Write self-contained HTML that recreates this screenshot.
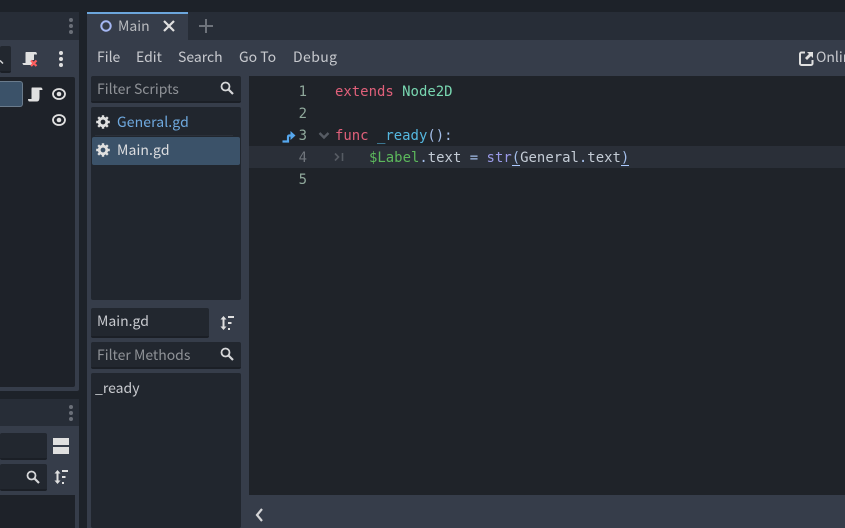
<!DOCTYPE html>
<html><head><meta charset="utf-8">
<style>
html,body{margin:0;padding:0}
body{width:845px;height:528px;overflow:hidden;position:relative;background:#1d2229;font-family:"Noto Sans CJK JP","Liberation Sans",sans-serif;font-size:14px;color:#c8cacf}
div,svg{position:absolute}
.t{white-space:nowrap;line-height:20px;height:20px}
.f{background:#22272f;border-bottom:2px solid #1b1f26;box-sizing:border-box;border-radius:2px}
.l{background:#21262e;border-radius:2px}
.dim{color:#8f9297}
.code{font-family:"DejaVu Sans Mono","Liberation Mono",monospace;font-size:13.95px;line-height:22px;height:22px;white-space:pre;color:#c4ccd6}
.n{font-family:"DejaVu Sans Mono","Liberation Mono",monospace;font-size:13.95px;line-height:22px;height:22px;color:#8fa89b;width:20px;text-align:right}
</style></head><body>

<!-- left panel -->
<div style="left:0;top:12px;width:79px;height:379px;background:#363d4a;border-radius:0 2px 2px 0"></div>
<div style="left:0;top:12px;width:79px;height:28px;background:#272d37"></div>
<div style="left:69px;top:18px;width:4px;height:4px;border-radius:2px;background:#6a6f78"></div>
<div style="left:69px;top:24px;width:4px;height:4px;border-radius:2px;background:#6a6f78"></div>
<div style="left:69px;top:30px;width:4px;height:4px;border-radius:2px;background:#6a6f78"></div>
<div class="f" style="left:0;top:46px;width:11px;height:27px;background:#22272f"></div>
<svg style="left:0;top:59px" width="6" height="6" viewBox="0 0 6 6"><path d="M0 1.500L3 4.500" fill="none" stroke="#d5d6d8" stroke-width="1.500"/></svg>
<svg style="left:22px;top:51px" width="16" height="16" viewBox="0 0 16 16"><path d="M4 1H13C14.500 1 15 2 15 3.500H12V9H10V14H2C1 14 .5 13 .5 12H3.500V3C3.500 2 3.500 1 4 1Z" fill="#e0e0e0"/><path d="M9 9.500L14.500 15M14.500 9.500L9 15" stroke="#ff5f5f" stroke-width="2.200"/></svg>
<div style="left:59px;top:51px;width:4px;height:4px;border-radius:2px;background:#e0e0e0"></div>
<div style="left:59px;top:57px;width:4px;height:4px;border-radius:2px;background:#e0e0e0"></div>
<div style="left:59px;top:63px;width:4px;height:4px;border-radius:2px;background:#e0e0e0"></div>
<div style="left:0;top:77px;width:75px;height:310px;background:#1e2229;border-radius:0 2px 2px 0"></div>
<div style="left:0;top:81px;width:22px;height:24px;background:#3b5269;border:1px solid #6a7b8c;border-left:0;border-radius:0 3px 3px 0"></div>
<svg style="left:28px;top:87px" width="15" height="15" viewBox="0 0 15 15"><path d="M4 .5H12.500C14 .5 14.500 1.500 14.500 3H11.500V10C11.500 12.500 11 14.500 9 14.500H1.500C.5 14.500 0 13.500 0 12H3.500V3C3.500 1.500 3.500 .5 4 .5Z" fill="#e0e0e0"/></svg>
<svg style="left:52px;top:87px" width="14" height="14" viewBox="0 0 14 14"><ellipse cx="7" cy="7" rx="6" ry="5" fill="none" stroke="#e0e0e0" stroke-width="1.800"/><circle cx="7" cy="7" r="2.300" fill="#e0e0e0"/></svg>
<svg style="left:52px;top:113px" width="14" height="14" viewBox="0 0 14 14"><ellipse cx="7" cy="7" rx="6" ry="5" fill="none" stroke="#e0e0e0" stroke-width="1.800"/><circle cx="7" cy="7" r="2.300" fill="#e0e0e0"/></svg>

<!-- left lower panel -->
<div style="left:0;top:399px;width:79px;height:129px;background:#363d4a;border-radius:0 2px 0 0"></div>
<div style="left:0;top:399px;width:79px;height:27px;background:#272d37"></div>
<div style="left:69px;top:405px;width:4px;height:4px;border-radius:2px;background:#6a6f78"></div>
<div style="left:69px;top:411px;width:4px;height:4px;border-radius:2px;background:#6a6f78"></div>
<div style="left:69px;top:417px;width:4px;height:4px;border-radius:2px;background:#6a6f78"></div>
<div class="f" style="left:0;top:433px;width:47px;height:27px"></div>
<div style="left:53px;top:438px;width:16px;height:7px;background:#e0e0e0"></div>
<div style="left:53px;top:447px;width:16px;height:7px;background:#e0e0e0"></div>
<div class="f" style="left:0;top:464px;width:47px;height:27px"></div>
<svg style="left:26px;top:470px" width="14" height="14" viewBox="0 0 14 14"><circle cx="5.500" cy="5.500" r="4" fill="none" stroke="#d5d6d8" stroke-width="1.800"/><path d="M8.500 8.500L13 13" stroke="#d5d6d8" stroke-width="2.200"/></svg>
<svg style="left:53px;top:469px" width="16" height="16" viewBox="0 0 16 16"><path d="M4.500 2V14" stroke="#e0e0e0" stroke-width="2"/><path d="M1.500 4.500L4.500 1L7.500 4.500ZM1.500 11.500L4.500 15L7.500 11.500Z" fill="#e0e0e0"/><path d="M9 2H15M9 8H12.500M9 14H11" stroke="#e0e0e0" stroke-width="2"/></svg>
<div style="left:0;top:495px;width:75px;height:33px;background:#1e2229"></div>

<!-- right panel -->
<div style="left:87px;top:12px;width:758px;height:516px;background:#363d4a"></div>
<div style="left:87px;top:12px;width:758px;height:28px;background:#272d37"></div>
<div style="left:87px;top:12px;width:101px;height:28px;background:#363d4a"></div>
<div style="left:87px;top:12px;width:101px;height:2px;background:#6ca6dc"></div>
<svg style="left:99px;top:19px" width="14" height="14" viewBox="0 0 14 14"><circle cx="7" cy="7" r="4.700" fill="none" stroke="#a5b7f3" stroke-width="2"/></svg>
<div class="t" style="left:118px;top:16px;color:#b9bbbf">Main</div>
<svg style="left:163px;top:20px" width="12" height="12" viewBox="0 0 12 12"><path d="M1 1L11 11M11 1L1 11" stroke="#e0e0e0" stroke-width="2.200"/></svg>
<svg style="left:198px;top:18px" width="16" height="16" viewBox="0 0 16 16"><path d="M8 1V15M1 8H15" stroke="#6e737b" stroke-width="2"/></svg>

<div class="t" style="left:97px;top:47px">File</div>
<div class="t" style="left:136px;top:47px">Edit</div>
<div class="t" style="left:178px;top:47px">Search</div>
<div class="t" style="left:239px;top:47px">Go To</div>
<div class="t" style="left:293px;top:47px;letter-spacing:.4px">Debug</div>
<svg style="left:799px;top:51px" width="15" height="15" viewBox="0 0 15 15"><path d="M6 1.500H2.500A1.500 1.500 0 0 0 1 3V12.500A1.500 1.500 0 0 0 2.500 14H12A1.500 1.500 0 0 0 13.500 12.500V9" fill="none" stroke="#e0e0e0" stroke-width="2"/><path d="M8 1H14V7L12 5L8 9L6 7L10 3Z" fill="#e0e0e0"/></svg>
<div style="left:816px;top:47px;width:29px;height:20px;overflow:hidden"><div class="t" style="left:0;top:0">Online Docs</div></div>

<!-- scripts column -->
<div class="f" style="left:91px;top:76px;width:150px;height:27px"></div>
<div class="t dim" style="left:97px;top:79px">Filter Scripts</div>
<svg style="left:220px;top:81px" width="14" height="14" viewBox="0 0 14 14"><circle cx="5.500" cy="5.500" r="4" fill="none" stroke="#d5d6d8" stroke-width="1.800"/><path d="M8.500 8.500L13 13" stroke="#d5d6d8" stroke-width="2.200"/></svg>
<div class="l" style="left:91px;top:107px;width:150px;height:193px"></div>
<div style="left:95px;top:135px;width:138px;height:1px;background:#2b3039"></div>
<div style="left:92px;top:137px;width:148px;height:28px;background:#3b5269;border-radius:2px"></div>
<svg style="left:96px;top:115px" width="14" height="14" viewBox="0 0 14 14"><circle cx="7" cy="7" r="3.800" fill="none" stroke="#e0e0e0" stroke-width="2.800"/><path d="M7 .2V13.800M.2 7H13.800M2.200 2.200L11.800 11.800M11.800 2.200L2.200 11.800" stroke="#e0e0e0" stroke-width="2.400" stroke-dasharray="3 7.600"/></svg>
<svg style="left:96px;top:143px" width="14" height="14" viewBox="0 0 14 14"><circle cx="7" cy="7" r="3.800" fill="none" stroke="#e0e0e0" stroke-width="2.800"/><path d="M7 .2V13.800M.2 7H13.800M2.200 2.200L11.800 11.800M11.800 2.200L2.200 11.800" stroke="#e0e0e0" stroke-width="2.400" stroke-dasharray="3 7.600"/></svg>
<div class="t" style="left:117px;top:112px;color:#6fa9df;letter-spacing:.1px">General.gd</div>
<div class="t" style="left:117px;top:140px;color:#dcdde0;letter-spacing:.1px">Main.gd</div>

<div class="f" style="left:91px;top:308px;width:118px;height:30px"></div>
<div class="t" style="left:97px;top:311px">Main.gd</div>
<svg style="left:219px;top:315px" width="16" height="16" viewBox="0 0 16 16"><path d="M4.500 2V14" stroke="#e0e0e0" stroke-width="2"/><path d="M1.500 4.500L4.500 1L7.500 4.500ZM1.500 11.500L4.500 15L7.500 11.500Z" fill="#e0e0e0"/><path d="M9 2H15M9 8H12.500M9 14H11" stroke="#e0e0e0" stroke-width="2"/></svg>
<div class="f" style="left:91px;top:342px;width:150px;height:27px"></div>
<div class="t dim" style="left:97px;top:345px">Filter Methods</div>
<svg style="left:220px;top:347px" width="14" height="14" viewBox="0 0 14 14"><circle cx="5.500" cy="5.500" r="4" fill="none" stroke="#d5d6d8" stroke-width="1.800"/><path d="M8.500 8.500L13 13" stroke="#d5d6d8" stroke-width="2.200"/></svg>
<div class="l" style="left:91px;top:373px;width:150px;height:155px"></div>
<div class="t" style="left:95px;top:378px">_ready</div>

<!-- editor -->
<div style="left:249px;top:76px;width:596px;height:419px;background:#1f2329"></div>
<div style="left:249px;top:146px;width:596px;height:22px;background:#2a2f38"></div>
<div class="n" style="left:287px;top:81px">1</div>
<div class="n" style="left:287px;top:103px">2</div>
<div class="n" style="left:287px;top:125px">3</div>
<div class="n" style="left:287px;top:147px;color:#70757c">4</div>
<div class="n" style="left:287px;top:169px">5</div>
<svg style="left:282px;top:129px" width="14" height="14" viewBox="0 0 14 14"><path d="M.5 12.500H6V8C6 7 6.500 6.500 7.500 6.500H9" fill="none" stroke="#56a8ef" stroke-width="2.200"/><path d="M8.500 2L13.500 6.500L8.500 11Z" fill="#56a8ef"/></svg>
<svg style="left:318px;top:131px" width="12" height="9" viewBox="0 0 12 9"><path d="M1.500 2L6 6.500L10.500 2" fill="none" stroke="#565b63" stroke-width="2.400"/></svg>
<svg style="left:334px;top:152px" width="10" height="10" viewBox="0 0 10 10"><path d="M1 1.500L4.500 5L1 8.500" fill="none" stroke="#565b63" stroke-width="1.600"/><path d="M8.500 1V9" stroke="#565b63" stroke-width="1.600"/></svg>

<div class="code" style="left:335px;top:81px"><span style="color:#e0607a">extends</span> <span style="color:#78d6b0">Node2D</span></div>
<div class="code" style="left:335px;top:125px"><span style="color:#e0607a">func</span> <span style="color:#55b8e0">_ready</span><span style="color:#a3bde8">():</span></div>
<div class="code" style="left:369px;top:147px"><span style="color:#5cb85c">$Label</span><span style="color:#a3bde8">.</span>text <span style="color:#a3bde8">=</span> <span style="color:#9a9ae8">str</span><span style="color:#a3bde8">(</span>General<span style="color:#a3bde8">.</span>text<span style="color:#a3bde8">)</span></div>
<div style="left:512px;top:165px;width:8px;height:1px;background:#abc9ff"></div>
<div style="left:621px;top:165px;width:8px;height:1px;background:#abc9ff"></div>

<svg style="left:254.500px;top:508px" width="9" height="14" viewBox="0 0 9 14"><path d="M7 1L2 7L7 13" fill="none" stroke="#d5d6d8" stroke-width="2.200"/></svg>
</body></html>
